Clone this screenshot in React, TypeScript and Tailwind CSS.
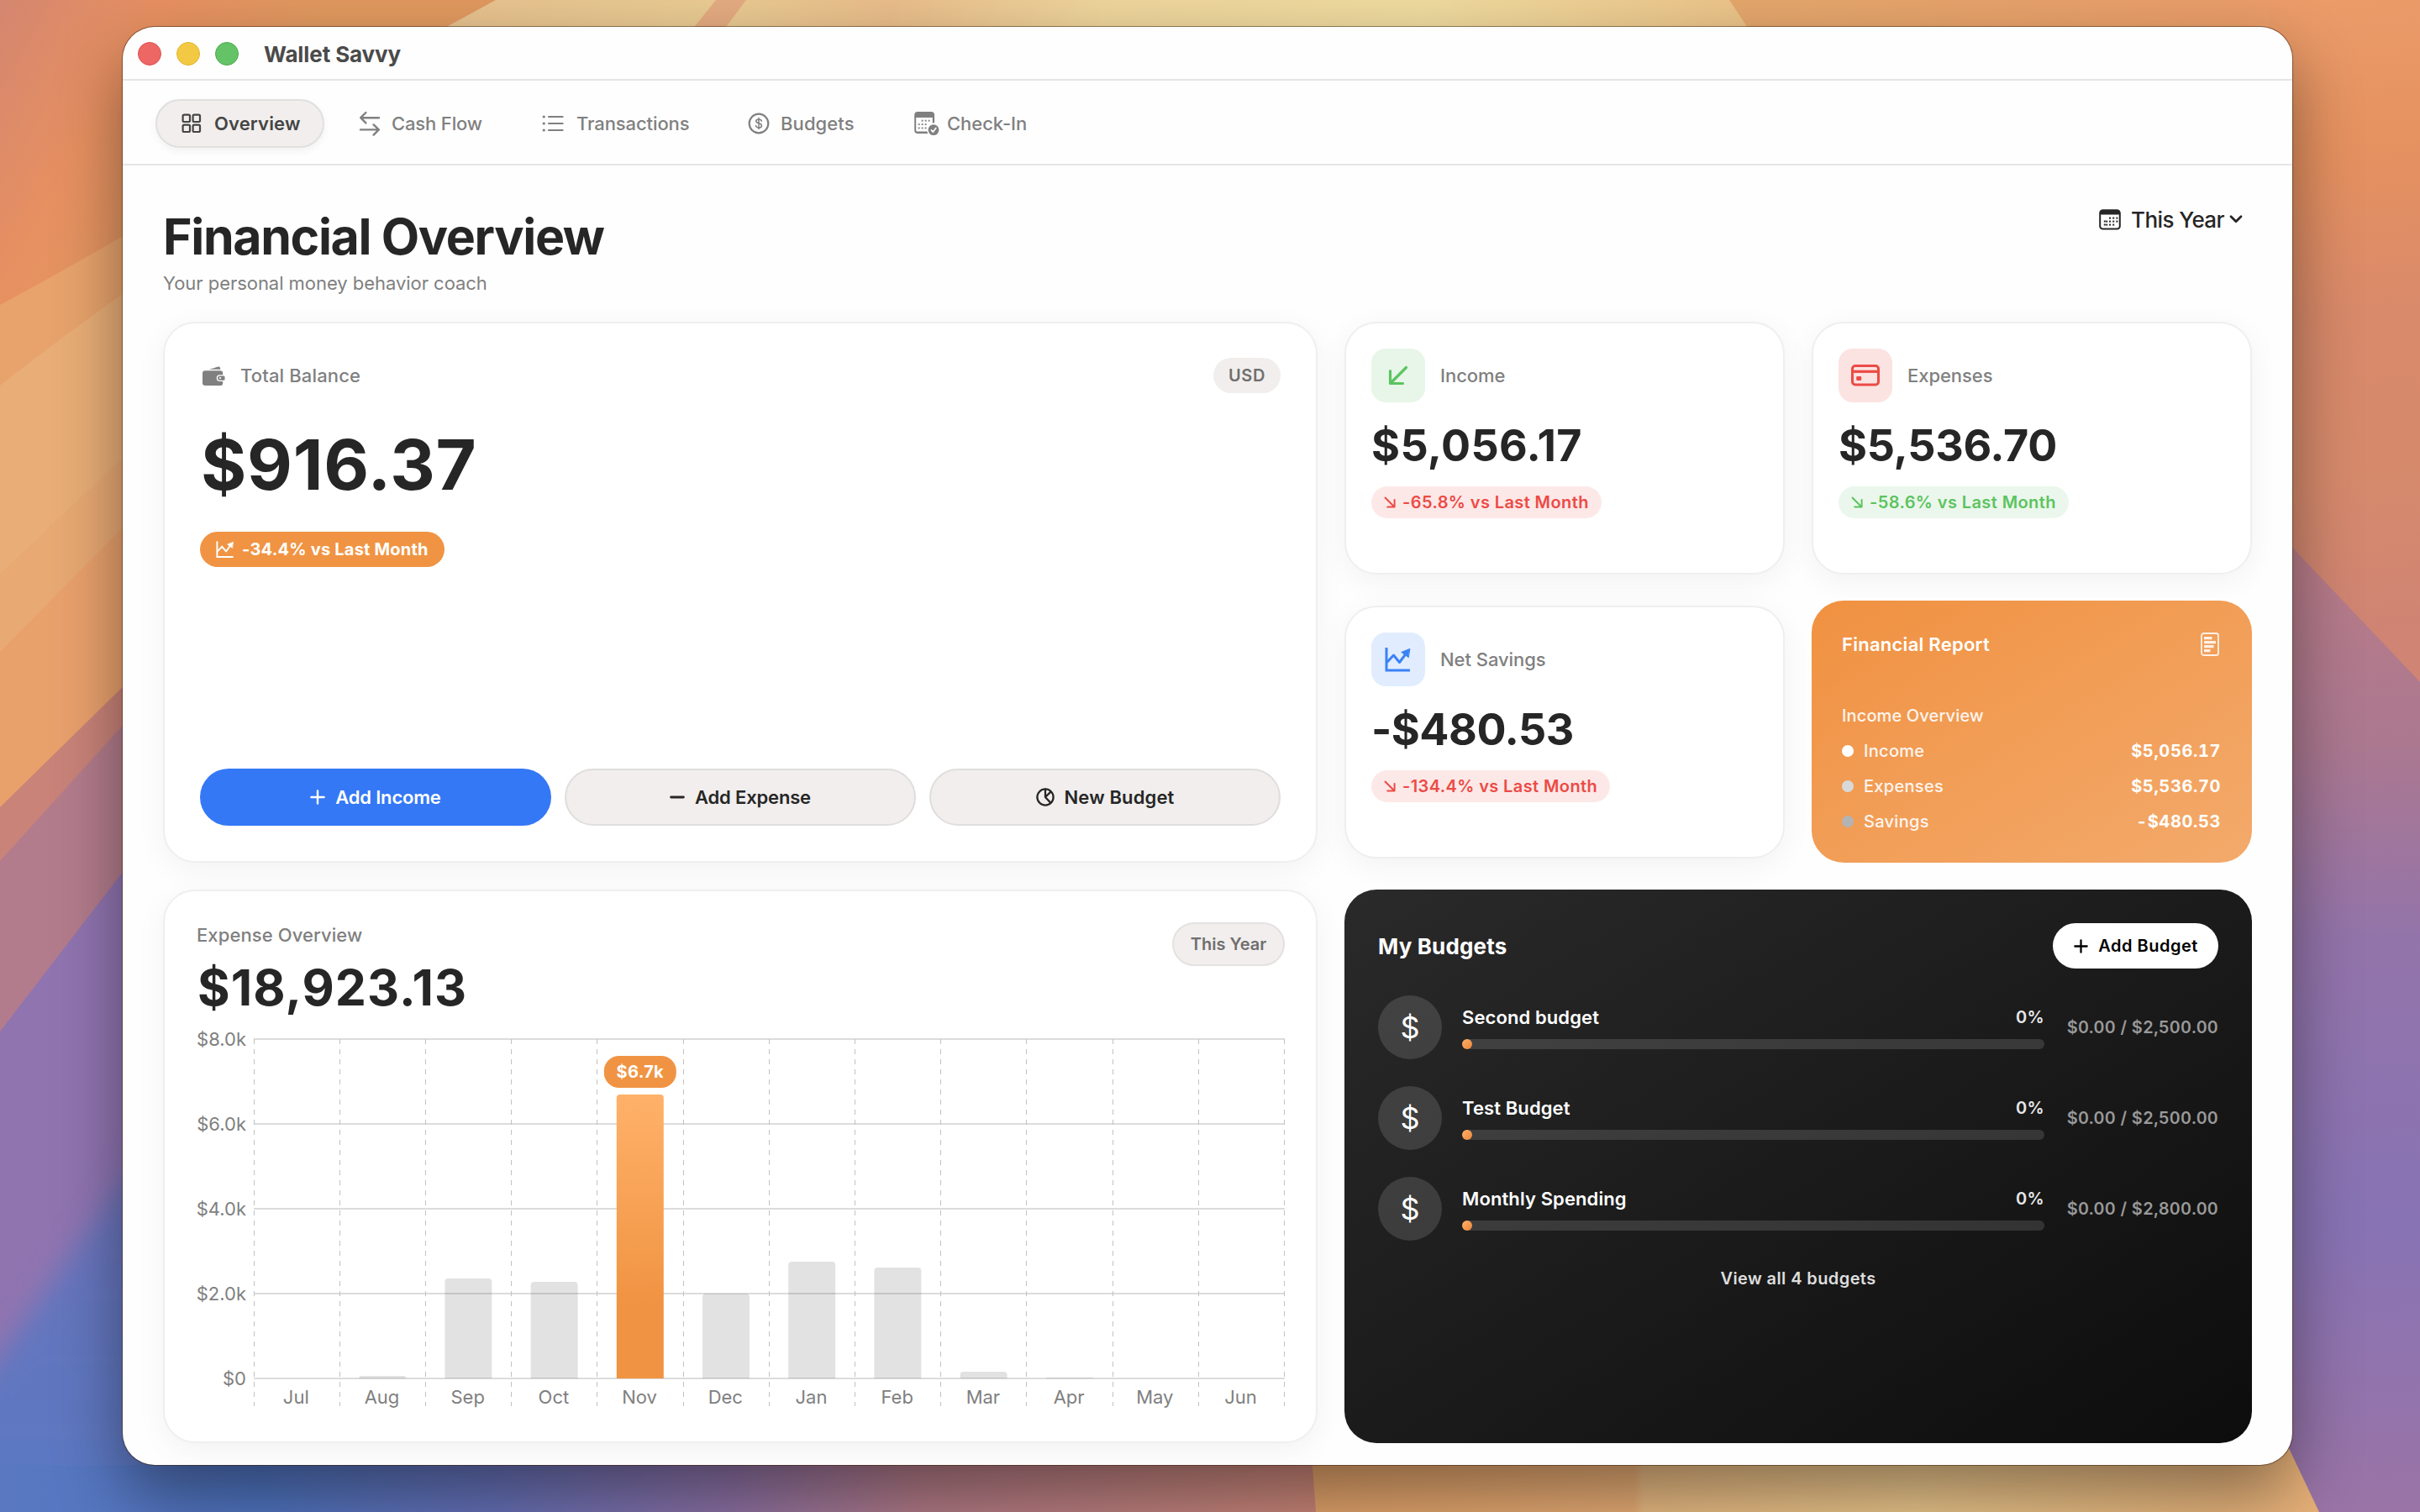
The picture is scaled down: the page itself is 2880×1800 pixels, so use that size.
import type { ReactNode } from "react";

/* ---------- Icons ---------- */

function GridIcon() {
  return (
    <svg width="24" height="24" viewBox="0 0 24 24" fill="none" stroke="currentColor" strokeWidth="2.2">
      <rect x="1.6" y="1.6" width="8.4" height="8.4" rx="1.6" />
      <rect x="13.6" y="1.6" width="8.4" height="8.4" rx="1.6" />
      <rect x="1.6" y="13.6" width="8.4" height="8.4" rx="1.6" />
      <rect x="13.6" y="13.6" width="8.4" height="8.4" rx="1.6" />
    </svg>
  );
}

function SwapIcon() {
  return (
    <svg width="26" height="30" viewBox="0 0 26 30" fill="none" stroke="currentColor" strokeWidth="2.4" strokeLinecap="round" strokeLinejoin="round">
      <path d="M24 8.2H2.4M8.4 2L2.2 8.2l6.2 6.2" />
      <path d="M2 22.4h21.6M17.6 16.4l6.2 6-6.2 6.2" />
    </svg>
  );
}

function ListIcon() {
  return (
    <svg width="26" height="22" viewBox="0 0 26 22" fill="none" stroke="currentColor" strokeWidth="2.2" strokeLinecap="round">
      <path d="M8 3h16.6M8 11h16.6M8 19h16.6" />
      <path d="M2.2 3h.1M2.2 11h.1M2.2 19h.1" strokeWidth="3.2" />
    </svg>
  );
}

function CoinIcon() {
  return (
    <svg width="26" height="26" viewBox="0 0 26 26" fill="none" stroke="currentColor" strokeLinecap="round">
      <circle cx="13" cy="13" r="11.3" strokeWidth="2.2" />
      <path d="M16.3 10.2c-.3-1.5-1.6-2.3-3.3-2.3-1.9 0-3.2.9-3.2 2.4 0 3.3 6.6 1.7 6.6 5.1 0 1.6-1.4 2.6-3.4 2.6-1.9 0-3.3-.9-3.5-2.5M13 6.500v13" strokeWidth="1.5" />
    </svg>
  );
}

const calendarDots = [
  [13.4, 11], [17.6, 11], [21.8, 11],
  [9.6, 15], [13.4, 15], [17.6, 15], [21.8, 15],
  [9.6, 19], [13.4, 19], [17.6, 19],
];

function CalendarCheckIcon() {
  return (
    <svg width="30" height="29" viewBox="0 0 30 29">
      <path fill="currentColor" fillRule="evenodd" d="M4.200 0h15.900a4 4 0 0 1 4 4v9.300c-1 0-1.600.1-2.300.4V7H2.200v14.700c0 1.300.6 1.900 1.900 1.900h11.400c.1.900.3 1.600.7 2.400H4.200a4 4 0 0 1-4-4V4a4 4 0 0 1 4-4z" />
      <g fill="currentColor">
        {[[9.6, 10.6], [13.6, 10.6], [17.6, 10.6], [5.6, 15], [9.6, 15], [13.6, 15], [5.6, 19.4], [9.6, 19.4], [13.6, 19.4]].map(([x, y]) => (
          <rect key={`${x}-${y}`} x={x - 0.9} y={y - 0.9} width="1.9" height="1.9" />
        ))}
      </g>
      <circle cx="23" cy="21.6" r="6.4" fill="currentColor" />
      <path d="M20.400 21.900l2 2.200 3.400-4.700" fill="none" stroke="#fff" strokeWidth="1.7" strokeLinecap="round" strokeLinejoin="round" />
    </svg>
  );
}

function CalendarIcon() {
  return (
    <svg width="26" height="25" viewBox="0 0 26 25">
      <rect x="1.2" y="1.2" width="23.6" height="22.4" rx="3.4" fill="none" stroke="currentColor" strokeWidth="2" />
      <path d="M1 6.600V4.400A3.400 3.400 0 0 1 4.400 1h17.200A3.400 3.400 0 0 1 25 4.400V6.600z" fill="currentColor" />
      <path d="M5.800 13.600h2v2h-2zM5.800 17.600h2v2h-2z" fill="currentColor" />
      {calendarDots.map(([x, y]) => (
        <rect key={`${x}-${y}`} x={x - 1.4} y={y - 1.4} width="2" height="2" fill="currentColor" />
      ))}
    </svg>
  );
}

function WalletIcon() {
  return (
    <svg width="28" height="24" viewBox="0 0 28 24">
      <path fill="currentColor" d="M8.500 3.800L19.600.6c1.200-.3 2.100.3 2.400 1.400l.4 1.800z" />
      <path
        fill="currentColor"
        fillRule="evenodd"
        d="M4.200 5.200h18a3 3 0 0 1 3 2.800v2.200h-3.600a3.900 3.900 0 0 0 0 7.800h3.600v2.200a3 3 0 0 1-3 2.800h-18a3.200 3.200 0 0 1-3.200-3.200V8.400a3.200 3.200 0 0 1 3.200-3.200z"
      />
      <path fill="currentColor" fillRule="evenodd" d="M21.800 11.400h4.400c.8 0 1.300.5 1.300 1.300v2.800c0 .8-.5 1.300-1.300 1.300h-4.400a2.700 2.700 0 0 1 0-5.400zm.2 1.600a1.100 1.100 0 1 0 0 2.200 1.100 1.100 0 0 0 0-2.200z" />
    </svg>
  );
}

function ChartIcon({ size, stroke }: { size: number; stroke: number }) {
  return (
    <svg width={size} height={size} viewBox="0 0 32 32" fill="none" stroke="currentColor" strokeWidth={stroke} strokeLinecap="round" strokeLinejoin="round">
      <path d="M2 2v27h28" strokeLinejoin="miter" strokeLinecap="butt" />
      <path d="M3 19l7.500-8 7 8.500L25 9.500" />
      <path d="M29.500 3.500L19.800 7.400l8.200 6z" fill="currentColor" strokeWidth="1" />
    </svg>
  );
}

function PlusIcon({ size }: { size: number }) {
  return (
    <svg width={size} height={size} viewBox="0 0 18 18" stroke="currentColor" strokeWidth="2.4" strokeLinecap="round">
      <path d="M9 1.400v15.200M1.400 9h15.200" />
    </svg>
  );
}

function MinusIcon() {
  return (
    <svg width="18" height="18" viewBox="0 0 18 18" stroke="currentColor" strokeWidth="2.8" strokeLinecap="round">
      <path d="M1.600 9h14.800" />
    </svg>
  );
}

function PieIcon() {
  return (
    <svg width="22" height="22" viewBox="0 0 22 22" fill="none" stroke="currentColor" strokeWidth="2.3" strokeLinecap="round" strokeLinejoin="round">
      <circle cx="11" cy="11" r="9.6" />
      <path d="M11 1.600V11l6.400-6.400M11 11l6 6.400" />
    </svg>
  );
}

function ArrowDownLeft() {
  return (
    <svg width="24" height="24" viewBox="0 0 24 24" fill="none" stroke="currentColor" strokeWidth="3.2" strokeLinecap="round" strokeLinejoin="round">
      <path d="M21.500 2.500L3 21M2.500 6.500v15H17.500" />
    </svg>
  );
}

function ArrowDownRight() {
  return (
    <svg width="14" height="14" viewBox="0 0 14 14" fill="none" stroke="currentColor" strokeWidth="2" strokeLinecap="round" strokeLinejoin="round">
      <path d="M1.500 1.500l10.700 10.700M12.600 4v8.600H4.200" />
    </svg>
  );
}

function CardIcon() {
  return (
    <svg width="34" height="26" viewBox="0 0 34 26" fill="none">
      <rect x="1.5" y="1.5" width="31" height="22.500" rx="3.4" stroke="currentColor" strokeWidth="3" />
      <path d="M1 8.300h32" stroke="currentColor" strokeWidth="3.2" />
      <rect x="6.2" y="14" width="6" height="5" rx="1" fill="currentColor" />
    </svg>
  );
}

function ReportIcon() {
  return (
    <svg width="22" height="28" viewBox="0 0 22 28" fill="none">
      <rect x="1" y="1" width="20" height="26" rx="2.6" stroke="currentColor" strokeWidth="1.8" />
      <path d="M4 6.700h9.500M4 11.700h14M4 16.700h11.500M4 21.700h7.500" stroke="currentColor" strokeWidth="3.2" />
    </svg>
  );
}

function ChevronDown() {
  return (
    <svg width="16" height="12" viewBox="0 0 16 12" fill="none" stroke="currentColor" strokeWidth="2.8" strokeLinecap="round" strokeLinejoin="round">
      <path d="M2 2.800l6 6 6-6" />
    </svg>
  );
}

/* ---------- Wallpaper ---------- */

function Wallpaper() {
  return (
    <svg className="absolute inset-0" width="2880" height="1800" viewBox="0 0 2880 1800" preserveAspectRatio="none">
      <defs>
        <linearGradient id="wpCoral" x1="0" y1="0" x2="300" y2="170" gradientUnits="userSpaceOnUse">
          <stop offset="0" stopColor="#d4866f" />
          <stop offset="0.5" stopColor="#e79061" />
          <stop offset="1" stopColor="#e0995f" />
        </linearGradient>
        <linearGradient id="wpTop" x1="380" y1="0" x2="2500" y2="0" gradientUnits="userSpaceOnUse">
          <stop offset="0" stopColor="#e3a66e" />
          <stop offset="0.07" stopColor="#e7c18e" />
          <stop offset="0.22" stopColor="#e9cb92" />
          <stop offset="0.32" stopColor="#e9bd8a" />
          <stop offset="0.44" stopColor="#eed59c" />
          <stop offset="0.62" stopColor="#efdb9f" />
          <stop offset="0.8" stopColor="#ebc388" />
          <stop offset="1" stopColor="#e5a067" />
        </linearGradient>
        <linearGradient id="wpRight" x1="2080" y1="0" x2="2720" y2="0" gradientUnits="userSpaceOnUse">
          <stop offset="0" stopColor="#e4a76c" />
          <stop offset="1" stopColor="#ea9c69" />
        </linearGradient>
        <linearGradient id="wpRightEdge" x1="2700" y1="0" x2="2800" y2="760" gradientUnits="userSpaceOnUse">
          <stop offset="0" stopColor="#ea9c69" />
          <stop offset="0.25" stopColor="#e69160" />
          <stop offset="0.5" stopColor="#d98a6a" />
          <stop offset="0.75" stopColor="#d68a6c" />
          <stop offset="1" stopColor="#cf8474" />
        </linearGradient>
        <linearGradient id="wpRightLow" x1="0" y1="660" x2="0" y2="1800" gradientUnits="userSpaceOnUse">
          <stop offset="0" stopColor="#b97c88" />
          <stop offset="0.2" stopColor="#ab7890" />
          <stop offset="0.4" stopColor="#9374aa" />
          <stop offset="0.7" stopColor="#8873b4" />
          <stop offset="1" stopColor="#9a74a6" />
        </linearGradient>
        <linearGradient id="wpBottom" x1="0" y1="0" x2="1570" y2="0" gradientUnits="userSpaceOnUse">
          <stop offset="0" stopColor="#5a78c2" />
          <stop offset="0.2" stopColor="#4f74c0" />
          <stop offset="0.38" stopColor="#6670b6" />
          <stop offset="0.55" stopColor="#8b70a4" />
          <stop offset="0.7" stopColor="#b27a86" />
          <stop offset="1" stopColor="#c98577" />
        </linearGradient>
        <linearGradient id="wpBottomRight" x1="1560" y1="0" x2="2760" y2="0" gradientUnits="userSpaceOnUse">
          <stop offset="0" stopColor="#e2a26a" />
          <stop offset="0.32" stopColor="#e8ad75" />
          <stop offset="0.33" stopColor="#eabb83" />
          <stop offset="0.6" stopColor="#ecc78c" />
          <stop offset="1" stopColor="#e7b078" />
        </linearGradient>
        <linearGradient id="wpBlue" x1="0" y1="1400" x2="0" y2="1800" gradientUnits="userSpaceOnUse">
          <stop offset="0" stopColor="#6b74bb" />
          <stop offset="1" stopColor="#5a79c3" />
        </linearGradient>
        <filter id="soft" x="-20%" y="-20%" width="140%" height="140%">
          <feGaussianBlur stdDeviation="16" />
        </filter>
      </defs>
      <rect width="2880" height="1800" fill="#e7a06a" />
      <rect width="1500" height="900" fill="url(#wpCoral)" />
      <path d="M590 0H2070L2110 60H480z" fill="url(#wpTop)" />
      <path d="M852 0H888L858 40H820z" fill="#e4ab80" />
      <path d="M2058 0H2720V60H2098z" fill="url(#wpRight)" />
      <path d="M2700 0H2880V900H2700z" fill="url(#wpRightEdge)" />
      <path d="M0 363Q80 320 160 273V1100H0z" fill="#e8a36c" />
      <path d="M0 459Q80 396 160 340V1100H0z" fill="#e9ae77" />
      <path d="M0 683L160 532V1100H0z" fill="#e8a973" />
      <path d="M0 776L160 614V1100H0z" fill="#e9a16c" />
      <path d="M0 961L160 804V1300H0z" fill="#c98379" />
      <path d="M0 1025L160 848V1300H0z" fill="#b37c8c" />
      <path d="M0 1228L160 1020V1800H0z" fill="#9074b0" />
      <path d="M-60 1700L220 1300V1900H-60z" fill="url(#wpBlue)" filter="url(#soft)" />
      <path d="M2700 622L2880 812V1800H2700z" fill="url(#wpRightLow)" />
      <rect y="1744" width="1580" height="56" fill="url(#wpBottom)" />
      <path d="M1560 1720H2722L2760 1800H1566z" fill="url(#wpBottomRight)" />
    </svg>
  );
}

/* ---------- Window chrome ---------- */

function TitleBar() {
  return (
    <div className="flex h-[64px] items-center border-b-2 border-[#e5e5e5] pt-[2px] pl-[18px]">
      <div className="flex gap-[18px]">
        <span className="size-7 rounded-full border border-[#e2504e] bg-[#ed6765]" />
        <span className="size-7 rounded-full border border-[#e3b52b] bg-[#f3c944]" />
        <span className="size-7 rounded-full border border-[#49ab4a] bg-[#64c366]" />
      </div>
      <div className="ml-[30px] text-[26px] font-bold tracking-[-0.1px] text-[#4a4a4a]">Wallet Savvy</div>
    </div>
  );
}

function NavItem({ icon, label, className }: { icon: ReactNode; label: string; className: string }) {
  return (
    <div className={`flex items-center text-[22px] font-medium text-[#808080] ${className}`}>
      {icon}
      <span>{label}</span>
    </div>
  );
}

function NavBar() {
  return (
    <div className="flex h-[101px] items-center border-b-2 border-[#e5e5e5] pt-[3px] pl-[39px]">
      <div className="flex h-[58px] w-[201px] items-center gap-[15px] rounded-full border-2 border-[#e2dfdf] bg-[#f1eeed] pl-[29px] text-[#454545] shadow-[0_4px_10px_rgba(0,0,0,0.05)]">
        <GridIcon />
        <span className="text-[22px] font-semibold tracking-[0.15px]">Overview</span>
      </div>
      <NavItem icon={<SwapIcon />} label="Cash Flow" className="ml-[41px] w-[218px] gap-[13px] tracking-[-0.15px]" />
      <NavItem icon={<ListIcon />} label="Transactions" className="w-[245px] gap-[15px] tracking-[-0.1px]" />
      <NavItem icon={<CoinIcon />} label="Budgets" className="w-[198px] gap-[13px] tracking-[0.1px]" />
      <NavItem icon={<CalendarCheckIcon />} label="Check-In" className="gap-[9px] tracking-[-0.05px]" />
    </div>
  );
}

/* ---------- Cards ---------- */

function PageHeader() {
  return (
    <div className="flex h-[186px] justify-between">
      <div className="pt-[50px]">
        <h1 className="text-[59px] leading-[70px] font-bold tracking-[-1.35px] text-[#262626]">Financial Overview</h1>
        <p className="mt-[6px] text-[22px] leading-7 tracking-[-0.04px] text-[#808080]">Your personal money behavior coach</p>
      </div>
      <div className="mt-[48px] mr-[11px] flex h-8 items-center text-[#262626]">
        <CalendarIcon />
        <span className="ml-3 text-[26px] font-medium tracking-[-0.6px]">This Year</span>
        <span className="ml-[6px]">
          <ChevronDown />
        </span>
      </div>
    </div>
  );
}

function BalanceCard() {
  return (
    <section className="flex h-[644px] flex-col rounded-[38px] border-2 border-[#efefef] bg-white px-[42px] pt-[41px] pb-[42px] shadow-[0_8px_36px_rgba(0,0,0,0.05)]">
      <div className="flex h-[42px] items-center text-[#808080]">
        <span className="ml-[2px] pt-px">
          <WalletIcon />
        </span>
        <span className="ml-[18px] text-[22px] font-medium tracking-[0.14px]">Total Balance</span>
        <span className="ml-auto flex h-[42px] w-20 items-center justify-center rounded-full bg-[#f1eeed] text-[20px] font-semibold tracking-[0.6px] text-[#706e6e]">
          USD
        </span>
      </div>
      <div className="mt-[43px] ml-px text-[83px] leading-[84px] font-bold tracking-[0.77px] text-[#262626]">$916.37</div>
      <div className="mt-[38px] flex h-[42px] w-[291px] items-center rounded-full bg-[#f09443] pl-[19px] text-white">
        <ChartIcon size={22} stroke={2.8} />
        <span className="ml-[9px] text-[20px] font-bold tracking-[0.21px]">-34.4% vs Last Month</span>
      </div>
      <div className="mt-auto grid grid-cols-3 gap-4 text-[22px] font-semibold text-[#262626]">
        <button className="flex h-[68px] items-center justify-center gap-3 rounded-full bg-[#3478f6] tracking-[-0.2px] text-white">
          <PlusIcon size={18} />
          Add Income
        </button>
        <button className="flex h-[68px] items-center justify-center gap-3 rounded-full border-2 border-[#e0dddd] bg-[#f1eeed] tracking-[-0.18px]">
          <MinusIcon />
          Add Expense
        </button>
        <button className="flex h-[68px] items-center justify-center gap-3 rounded-full border-2 border-[#e0dddd] bg-[#f1eeed] tracking-[0.13px]">
          <PieIcon />
          New Budget
        </button>
      </div>
    </section>
  );
}

type Stat = {
  label: string;
  amount: string;
  change: string;
  icon: ReactNode;
  box: string;
  amountClass: string;
  pill: string;
};

function StatCard({ label, amount, change, icon, box, amountClass, pill }: Stat) {
  return (
    <section className="h-[301px] rounded-[38px] border-2 border-[#efefef] bg-white p-[30px] shadow-[0_8px_36px_rgba(0,0,0,0.05)]">
      <div className="flex items-center gap-[18px]">
        <div className={`flex size-16 items-center justify-center rounded-[17px] ${box}`}>{icon}</div>
        <span className="text-[22px] font-medium tracking-[-0.05px] text-[#808080]">{label}</span>
      </div>
      <div className={`mt-[26px] text-[52px] leading-[52px] font-bold text-[#262626] ${amountClass}`}>{amount}</div>
      <div className={`mt-[22px] flex h-[38px] w-fit items-center gap-[8px] rounded-full px-[15px] text-[20px] font-semibold tracking-[0.4px] ${pill}`}>
        <ArrowDownRight />
        {change}
      </div>
    </section>
  );
}

const reportRows = [
  { label: "Income", value: "$5,056.17", dot: "bg-white" },
  { label: "Expenses", value: "$5,536.70", dot: "bg-[#d9d9d9]" },
  { label: "Savings", value: "-$480.53", dot: "bg-[#b3b3b3]" },
];

function ReportCard() {
  return (
    <section className="h-[312px] rounded-[38px] bg-linear-to-br from-[#f09140] to-[#f3aa6b] px-[37px] pt-[38px] text-white">
      <div className="flex items-center justify-between">
        <h2 className="-ml-px text-[22px] leading-7 font-semibold tracking-[0.26px]">Financial Report</h2>
        <span className="mr-[2px] text-white/85">
          <ReportIcon />
        </span>
      </div>
      <div className="mt-[58px] -ml-px text-[20px] leading-[26px] font-medium tracking-[0.13px] text-white/90">Income Overview</div>
      <div className="mt-4 flex flex-col gap-4">
        {reportRows.map((row) => (
          <div key={row.label} className="flex h-[26px] items-center text-[20px]">
            <span className={`-ml-px size-[14px] rounded-full ${row.dot}`} />
            <span className="ml-3 font-medium tracking-[0.3px] text-white/90">{row.label}</span>
            <span className="ml-auto font-bold tracking-[0.6px] tabular-nums">{row.value}</span>
          </div>
        ))}
      </div>
    </section>
  );
}

/* ---------- Expense chart ---------- */

const months = [
  { name: "Jul", height: 0 },
  { name: "Aug", height: 3 },
  { name: "Sep", height: 119 },
  { name: "Oct", height: 115 },
  { name: "Nov", height: 338, badge: "$6.7k" },
  { name: "Dec", height: 101 },
  { name: "Jan", height: 139 },
  { name: "Feb", height: 132 },
  { name: "Mar", height: 8 },
  { name: "Apr", height: 1 },
  { name: "May", height: 0 },
  { name: "Jun", height: 0 },
];
const axisLabels = ["$8.0k", "$6.0k", "$4.0k", "$2.0k", "$0"];
const plotLeft = 68;
const slot = 102.2;
const baseY = 416;

function barPath(x: number, h: number) {
  const r = Math.min(4, h);
  return `M${x} ${baseY}v${-(h - r)}q0 ${-r} ${r} ${-r}h${56 - 2 * r}q${r} 0 ${r} ${r}v${h - r}z`;
}

function ExpenseChart() {
  return (
    <svg className="mt-[18px] block overflow-visible" width="1295" height="450" viewBox="0 0 1295 450" fontFamily="Inter, sans-serif" fontSize="22">
      <defs>
        <linearGradient id="peakBar" x1="0" y1="0" x2="0" y2="1">
          <stop offset="0" stopColor="#ffb169" />
          <stop offset="0.75" stopColor="#f09342" />
          <stop offset="1" stopColor="#f09342" />
        </linearGradient>
      </defs>
      {axisLabels.map((label, i) => (
        <g key={label}>
          <path d={`M${plotLeft} ${12 + i * 101}H1295`} stroke="#dcdcdc" strokeWidth="2" />
          <text x="59" y={20 + i * 101} textAnchor="end" fill="#808080">
            {label}
          </text>
        </g>
      ))}
      {Array.from({ length: 13 }, (_, i) => (
        <path key={i} d={`M${Math.floor(plotLeft + i * slot) + 0.5} 12V449`} stroke="#c2c2c2" strokeDasharray="6 6" />
      ))}
      {months.map((m, i) => {
        const x = plotLeft + i * slot + 23;
        return (
          <g key={m.name}>
            {m.height > 0 && <path d={barPath(x, m.height)} fill={m.badge ? "url(#peakBar)" : "rgba(0,0,0,0.112)"} />}
            {m.badge && (
              <g>
                <rect x={x + 28 - 43} y={baseY - m.height - 46} width="86" height="38" rx="18" fill="#f09443" />
                <text x={x + 28} y={baseY - m.height - 19.7} textAnchor="middle" fontSize="20" fontWeight="700" letterSpacing="0.3" fill="#fff">
                  {m.badge}
                </text>
              </g>
            )}
            <text x={plotLeft + (i + 0.5) * slot - 0.8} y="446" textAnchor="middle" fill="#808080">
              {m.name}
            </text>
          </g>
        );
      })}
    </svg>
  );
}

function ExpenseCard() {
  return (
    <section className="h-[659px] rounded-[38px] border-2 border-[#efefef] bg-white px-[38px] pt-[38px] shadow-[0_8px_36px_rgba(0,0,0,0.05)]">
      <div className="flex items-start justify-between">
        <div>
          <div className="text-[22px] leading-7 font-medium tracking-[0.1px] text-[#808080]">Expense Overview</div>
          <div className="mt-[17px] ml-px text-[59px] leading-[64px] font-bold tracking-[1.07px] text-[#262626]">$18,923.13</div>
        </div>
        <div className="-mt-px -mr-px flex h-[52px] w-[134px] items-center justify-center rounded-full border-2 border-[#e4e1e1] bg-[#f1eeed] text-[20px] font-semibold text-[#706e6e]">
          This Year
        </div>
      </div>
      <div className="-mt-px">
        <ExpenseChart />
      </div>
    </section>
  );
}

/* ---------- Budgets ---------- */

const budgets = [
  { name: "Second budget", amount: "$0.00 / $2,500.00" },
  { name: "Test Budget", amount: "$0.00 / $2,500.00" },
  { name: "Monthly Spending", amount: "$0.00 / $2,800.00" },
];

function BudgetsCard() {
  return (
    <section className="h-[659px] rounded-[38px] bg-linear-to-br from-[#2a2a2a] to-[#0d0d0d] p-10 text-white">
      <div className="flex items-center justify-between">
        <h2 className="text-[26px] font-bold tracking-[0.15px]">My Budgets</h2>
        <button className="flex h-[54px] w-[197px] items-center justify-center gap-[12px] rounded-full bg-white pl-px text-[20px] font-semibold tracking-[0.5px] text-black">
          <PlusIcon size={17} />
          Add Budget
        </button>
      </div>
      <div className="mt-8 flex flex-col gap-8">
        {budgets.map((b) => (
          <div key={b.name} className="flex h-[76px] items-center">
            <div className="flex size-[76px] items-center justify-center rounded-full bg-white/13 text-[36px]">$</div>
            <div className="ml-6 w-[693px]">
              <div className="flex justify-between text-[22px] leading-7 font-semibold">
                <span className="tracking-[0.1px]">{b.name}</span>
                <span className="text-[20px] tracking-[0.4px] text-white/90">0%</span>
              </div>
              <div className="mt-3 h-3 rounded-full bg-white/13">
                <div className="size-3 rounded-full bg-linear-to-br from-[#ffb169] to-[#ea8738]" />
              </div>
            </div>
            <div className="ml-auto text-[20px] font-semibold tracking-[0.2px] text-[#999999] tabular-nums">{b.amount}</div>
          </div>
        ))}
      </div>
      <div className="mt-[31px] text-center text-[20px] leading-7 font-semibold tracking-[0.4px] text-[#dedede]">View all 4 budgets</div>
    </section>
  );
}

/* ---------- App ---------- */

export default function App() {
  return (
    <div className="relative h-[1800px] w-[2880px] overflow-hidden font-['Inter',sans-serif]">
      <Wallpaper />
      <div className="relative mt-8 ml-[146px] h-[1712px] w-[2582px] rounded-[38px] bg-[#fefefe] shadow-[0_0_0_1px_rgba(60,30,10,0.5),0_36px_80px_rgba(0,0,0,0.42)]">
        <TitleBar />
        <NavBar />
        <main className="px-12">
          <PageHeader />
          <div className="grid grid-cols-[1374px_1080px] gap-8">
            <BalanceCard />
            <div className="flex justify-between">
              <div className="flex w-[524px] flex-col gap-[37px]">
                <StatCard
                  label="Income"
                  amount="$5,056.17"
                  change="-65.8% vs Last Month"
                  icon={<ArrowDownLeft />}
                  box="bg-[#e7f6e8] text-[#5cc460]"
                  amountClass="tracking-[0.35px]"
                  pill="bg-[#fde8e8] text-[#ec4b45]"
                />
                <StatCard
                  label="Net Savings"
                  amount="-$480.53"
                  change="-134.4% vs Last Month"
                  icon={<ChartIcon size={32} stroke={3} />}
                  box="bg-[#e1edfe] text-[#3b82f6]"
                  amountClass="tracking-[-0.5px]"
                  pill="bg-[#fde8e8] text-[#ec4b45]"
                />
              </div>
              <div className="flex w-[524px] flex-col gap-[31px]">
                <StatCard
                  label="Expenses"
                  amount="$5,536.70"
                  change="-58.6% vs Last Month"
                  icon={<CardIcon />}
                  box="bg-[#fbe3e2] text-[#ec4b45]"
                  amountClass="tracking-[-0.3px]"
                  pill="bg-[#ebf7ec] text-[#5cc460]"
                />
                <ReportCard />
              </div>
            </div>
            <ExpenseCard />
            <BudgetsCard />
          </div>
        </main>
      </div>
    </div>
  );
}
